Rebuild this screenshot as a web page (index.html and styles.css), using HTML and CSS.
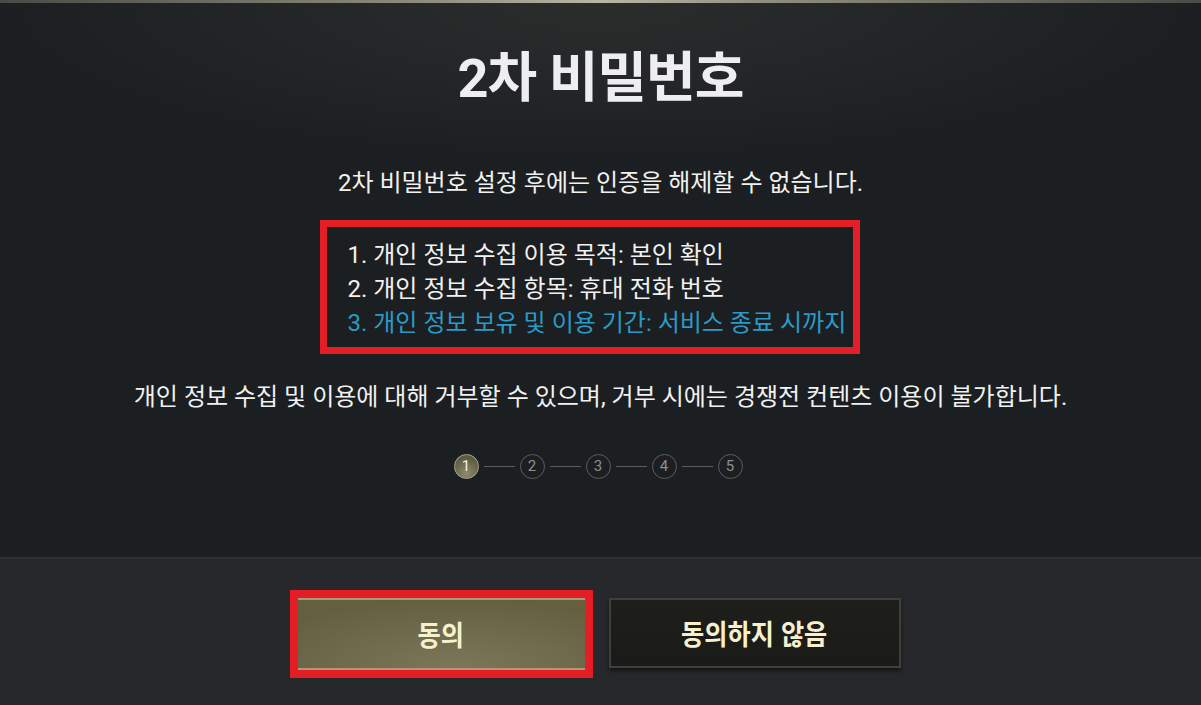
FILE: index.html
```html
<!DOCTYPE html>
<html lang="ko">
<head>
  <meta charset="UTF-8">
  <title>2차 비밀번호</title>
  <link rel="stylesheet" href="styles.css">
</head>
<body>
  <div class="topbar"></div>

  <div class="main">
    <h1 class="title">2차 비밀번호</h1>
    <p class="notice">2차 비밀번호 설정 후에는 인증을 해제할 수 없습니다.</p>

    <div class="terms">
      <div class="term">1. 개인 정보 수집 이용 목적: 본인 확인</div>
      <div class="term">2. 개인 정보 수집 항목: 휴대 전화 번호</div>
      <div class="term term-blue">3. 개인 정보 보유 및 이용 기간: 서비스 종료 시까지</div>
    </div>

    <p class="refuse">개인 정보 수집 및 이용에 대해 거부할 수 있으며, 거부 시에는 경쟁전 컨텐츠 이용이 불가합니다.</p>

    <div class="steps">
      <span class="step active">1</span>
      <span class="line"></span>
      <span class="step">2</span>
      <span class="line"></span>
      <span class="step">3</span>
      <span class="line"></span>
      <span class="step">4</span>
      <span class="line"></span>
      <span class="step">5</span>
    </div>
  </div>

  <div class="footer">
    <button class="btn btn-agree"><span class="btn-label">동의</span></button>
    <button class="btn btn-decline"><span class="btn-label">동의하지 않음</span></button>
  </div>
</body>
</html>
```

FILE: styles.css
```css
body { margin: 0; height: 705px; overflow: hidden; background: #1c1f21; color: #f1f1f1; font-family: Roboto, "Noto Sans CJK KR", sans-serif; }
.topbar { height: 3px; background: linear-gradient(90deg, #4a4b47 0%, #8d8c7c 35%, #b9b7a2 50%, #8d8c7c 65%, #4a4b47 100%); }
.main { height: 554px; display: flex; flex-direction: column; align-items: center; background: radial-gradient(ellipse 620px 160px at 50% 0, #2b2d2d 0%, #1c1f21 100%); }
.title { margin: 38px 0 0; font-size: 54px; line-height: 76px; font-weight: 700; color: #eeeef2; letter-spacing: -1px; }
.notice { margin: 52px 0 0; font-size: 24px; line-height: 28px; }
.terms { margin: 23px 22px 0 0; width: 540px; padding: 11px 0 7px 21px; border: 7px solid #e41e26; text-align: left; box-sizing: border-box; }
.term { font-size: 24px; line-height: 34px; }
.term-blue { color: #2a9ac8; }
.refuse { margin: 28px 0 0; font-size: 24px; line-height: 30px; }
.steps { margin: 42px 5px 0 0; display: flex; align-items: center; }
.step { width: 23px; height: 23px; border: 1.5px solid #5b5d5d; border-radius: 50%; font-size: 15px; line-height: 23px; text-align: center; color: #8f908c; }
.step.active { background: radial-gradient(circle at 50% 80%, #8f8b6c 0%, #5e5b44 70%); border-color: #a9a690; color: #f2f1e6; }
.line { width: 31px; height: 1px; margin: 0 5px; background: #5b5d5d; }
.footer { height: 148px; border-top: 2px solid #2f3234; background: #27282c; display: flex; justify-content: center; align-items: flex-start; gap: 24px; padding: 39px 3px 0 0; box-sizing: border-box; }
.btn { width: 287px; height: 72px; padding: 0; font-family: "Noto Sans CJK KR", sans-serif; font-size: 28px; font-weight: 700; color: #f6f0cf; cursor: pointer; }
.btn-label { display: inline-block; transform: scaleX(0.9); }
.btn-agree { border: none; border-top: 2px solid #ad9a7c; border-bottom: 2px solid #ad9a7c; background: radial-gradient(ellipse 220px 70px at 55% 100%, #7c775a 0%, #645f3f 100%); outline: 8px solid #e51d24; }
.btn-decline { width: 292px; height: 70px; border: 2px solid #3f4039; background: linear-gradient(180deg, #1e1f1b 0%, #1a1b18 100%); box-shadow: 0 3px 4px rgba(0,0,0,0.5); }
```
